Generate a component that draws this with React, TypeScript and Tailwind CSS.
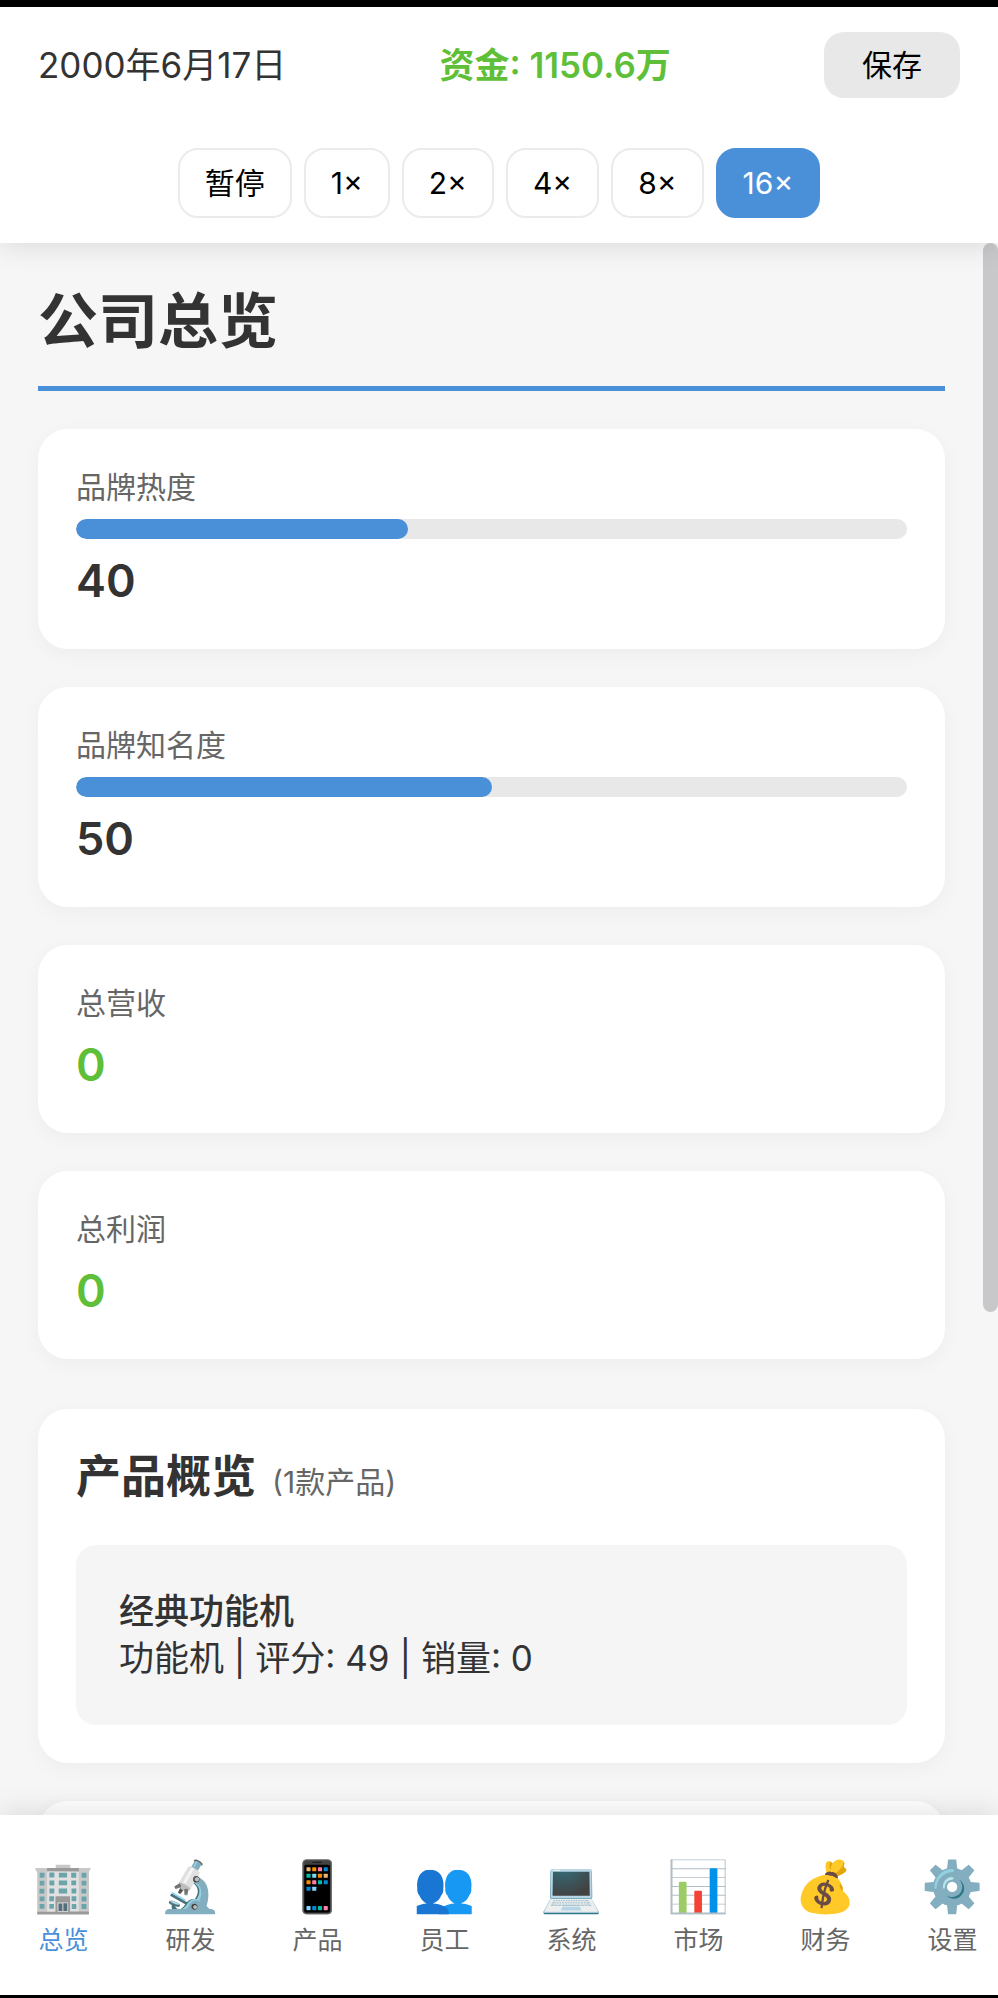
import React, { useState } from 'react';
import clsx from 'clsx';

const SPEEDS = ['暂停', '1×', '2×', '4×', '8×', '16×'];

const TABS = [
  { name: '总览', icon: '🏢' },
  { name: '研发', icon: '🔬' },
  { name: '产品', icon: '📱' },
  { name: '员工', icon: '👥' },
  { name: '系统', icon: '💻' },
  { name: '市场', icon: '📊' },
  { name: '财务', icon: '💰' },
  { name: '设置', icon: '⚙️' },
];

const Card: React.FC<{ className?: string; children?: React.ReactNode }> = ({ className, children }) => (
  <section className={clsx('bg-white rounded-[30px] p-[38px] shadow-[0_5px_20px_rgba(0,0,0,0.04)]', className)}>
    {children}
  </section>
);

const MeterCard: React.FC<{ label: string; value: number }> = ({ label, value }) => (
  <Card>
    <h2 className="text-[30px] leading-[40px] text-[#666]">{label}</h2>
    <div
      role="progressbar"
      aria-label={label}
      aria-valuenow={value}
      className="my-3 h-5 rounded-[10px] bg-[#e8e8e8] overflow-hidden"
    >
      <div className="h-full rounded-[10px] bg-[#4a90d9]" style={{ width: `${value}%` }} />
    </div>
    <p className="text-[45px] leading-[60px] font-semibold">{value}</p>
  </Card>
);

const MoneyCard: React.FC<{ label: string; value: number }> = ({ label, value }) => (
  <Card>
    <h2 className="mb-3 text-[30px] leading-[40px] text-[#666]">{label}</h2>
    <p className="text-[45px] leading-[60px] font-semibold text-[#5fbf38]">{value}</p>
  </Card>
);

const App: React.FC = () => {
  const [speed, setSpeed] = useState('16×');
  const [tab, setTab] = useState('总览');

  return (
    <div className="h-screen flex flex-col bg-[#f6f6f7] text-[#333] font-[Inter,'Noto_Sans_CJK_SC',sans-serif] border-t-[7px] border-b-[3px] border-black overflow-hidden">
      <header className="relative z-10 shrink-0 bg-white px-[38px] py-[25px] shadow-[0_5px_25px_rgba(0,0,0,0.1)]">
        <div className="flex items-center justify-between text-[35px] leading-[50px]">
          <time dateTime="2000-06-17">2000年6月17日</time>
          <span className="font-semibold text-[#5fbf38]">资金: 1150.6万</span>
          <button className="h-[66px] px-[38px] rounded-[20px] bg-[#e8e8e8] text-[30px] text-black">保存</button>
        </div>

        <div className="mt-[50px] flex justify-center gap-3">
          {SPEEDS.map((s) => (
            <button
              key={s}
              onClick={() => setSpeed(s)}
              className={clsx(
                'h-[70px] px-[25px] rounded-[20px] border-2 text-[30px]',
                s === speed ? 'bg-[#4a90d9] border-[#4a90d9] text-white' : 'bg-white border-[#ebebeb] text-black'
              )}
            >
              {s}
            </button>
          ))}
        </div>
      </header>

      <div className="flex-1 min-h-0 flex">
        <main className="flex-1 min-w-0 overflow-hidden p-[38px]">
          <h1 className="pb-[25px] text-[60px] leading-[80px] font-semibold border-b-[5px] border-[#4a90d9]">公司总览</h1>

          <div className="mt-[38px] flex flex-col gap-[38px]">
            <MeterCard label="品牌热度" value={40} />
            <MeterCard label="品牌知名度" value={50} />
            <MoneyCard label="总营收" value={0} />
            <MoneyCard label="总利润" value={0} />
          </div>

          <Card className="mt-[50px]">
            <div className="flex items-baseline gap-4">
              <h2 className="text-[45px] leading-[60px] font-semibold">产品概览</h2>
              <span className="text-[30px] text-[#666]">(1款产品)</span>
            </div>
            <div className="mt-[38px] rounded-[20px] bg-[#f5f5f5] p-[43px] text-[35px] leading-[47px]">
              <h3 className="font-medium">经典功能机</h3>
              <p>功能机 | 评分: 49 | 销量: 0</p>
            </div>
          </Card>

          <Card className="mt-[38px] h-40" />
        </main>

        {/* Scroll thumb */}
        <div className="w-[15px] shrink-0">
          <div className="h-[68%] rounded-full bg-[#c8c8ca]" />
        </div>
      </div>

      <nav className="relative z-10 shrink-0 h-[180px] pt-[42px] flex items-start overflow-x-clip bg-white shadow-[0_-5px_25px_rgba(0,0,0,0.1)]">
        {TABS.map((t) => (
          <button
            key={t.name}
            onClick={() => setTab(t.name)}
            className={clsx(
              'w-[127px] shrink-0 flex flex-col items-center',
              t.name === tab ? 'text-[#4a90d9]' : 'text-[#666]'
            )}
          >
            <span className="font-['Noto_Color_Emoji'] text-[50px] leading-[60px]">{t.icon}</span>
            <span className="mt-[6px] text-[25px] leading-[35px]">{t.name}</span>
          </button>
        ))}
      </nav>
    </div>
  );
};

export default App;
